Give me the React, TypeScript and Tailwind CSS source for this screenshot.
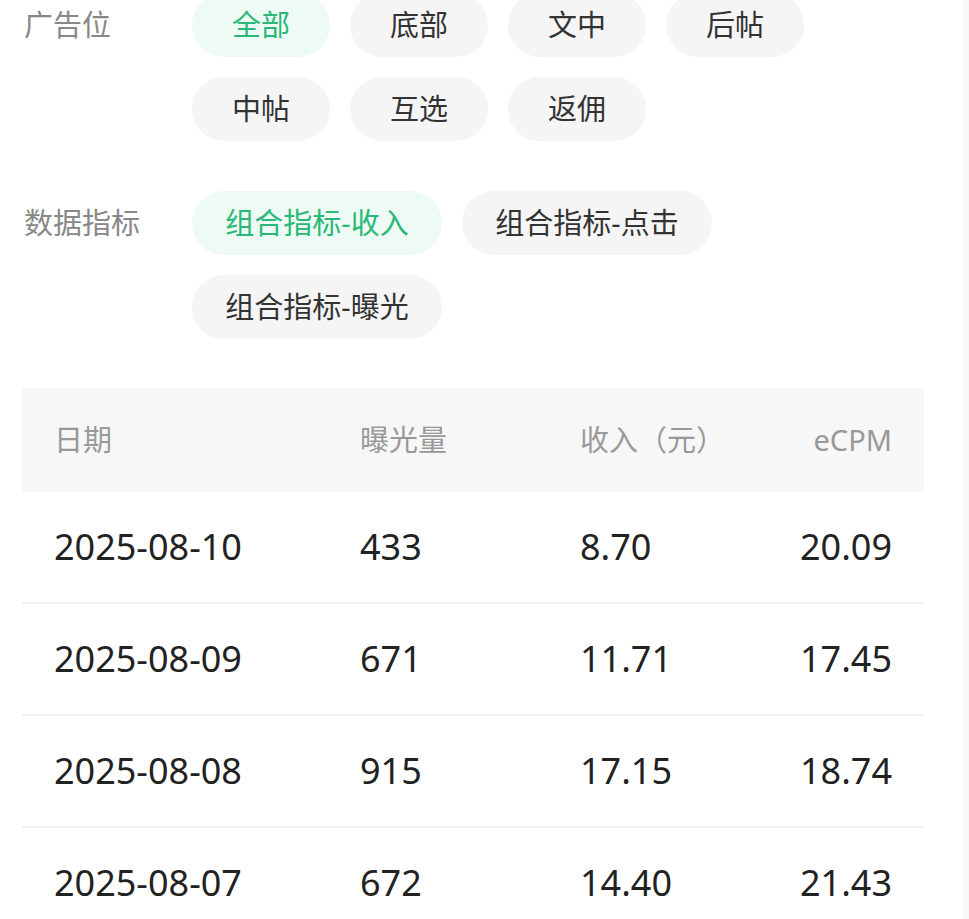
import React, { useState } from 'react';

const FONT = '"Noto Sans", "Noto Sans CJK SC", sans-serif';

const adSlots = ['全部', '底部', '文中', '后帖', '中帖', '互选', '返佣'];
const metrics = ['组合指标-收入', '组合指标-点击', '组合指标-曝光'];

const rows = [
  { date: '2025-08-10', views: '433', income: '8.70', ecpm: '20.09' },
  { date: '2025-08-09', views: '671', income: '11.71', ecpm: '17.45' },
  { date: '2025-08-08', views: '915', income: '17.15', ecpm: '18.74' },
  { date: '2025-08-07', views: '672', income: '14.40', ecpm: '21.43' },
];

function Chip({ label, active, wide, onClick }: { label: string; active: boolean; wide?: boolean; onClick: () => void }) {
  return (
    <button
      onClick={onClick}
      className={`h-[64px] rounded-full flex items-center justify-center text-[29px] ${wide ? 'w-[250px]' : 'w-[138px]'} ${
        active ? 'bg-[#eefaf4] text-[#29b877]' : 'bg-[#f5f5f5] text-[#333333]'
      }`}
    >
      {label}
    </button>
  );
}

function FilterRow({
  title,
  options,
  value,
  wide,
  onChange,
}: {
  title: string;
  options: string[];
  value: string;
  wide?: boolean;
  onChange: (v: string) => void;
}) {
  return (
    <div className="flex">
      <div className="w-[168px] shrink-0 h-[64px] flex items-center text-[29px] text-[#888888]">{title}</div>
      <div className={`flex flex-wrap gap-5 ${wide ? 'w-[560px]' : 'w-[640px]'}`}>
        {options.map((o) => (
          <Chip key={o} label={o} active={o === value} wide={wide} onClick={() => onChange(o)} />
        ))}
      </div>
    </div>
  );
}

export default function App() {
  const [slot, setSlot] = useState('全部');
  const [metric, setMetric] = useState('组合指标-收入');

  return (
    <div className="flex bg-white h-[919px] overflow-hidden" style={{ fontFamily: FONT }}>
      <div className="flex-1 pl-6 pr-[39px] -mt-[7px]">
        <div className="flex flex-col gap-[50px]">
          <FilterRow title="广告位" options={adSlots} value={slot} onChange={setSlot} />
          <FilterRow title="数据指标" options={metrics} value={metric} wide onChange={setMetric} />
        </div>

        <div className="mt-[49px] -ml-[2px]">
          <div className="h-[104px] bg-[#f7f7f7] grid grid-cols-[306px_220px_1fr_auto] items-center px-8 text-[29px] text-[#999999]">
            <span>日期</span>
            <span>曝光量</span>
            <span>收入（元）</span>
            <span className="text-right">eCPM</span>
          </div>
          {rows.map((r) => (
            <div
              key={r.date}
              className="h-[112px] border-b-2 border-[#f2f2f2] grid grid-cols-[306px_220px_1fr_auto] items-center px-8 text-[36px] text-[#222222]"
            >
              <span>{r.date}</span>
              <span>{r.views}</span>
              <span>{r.income}</span>
              <span className="text-right">{r.ecpm}</span>
            </div>
          ))}
        </div>
      </div>
      <div className="w-[6px] shrink-0 bg-[#f7f7f7]" />
    </div>
  );
}
